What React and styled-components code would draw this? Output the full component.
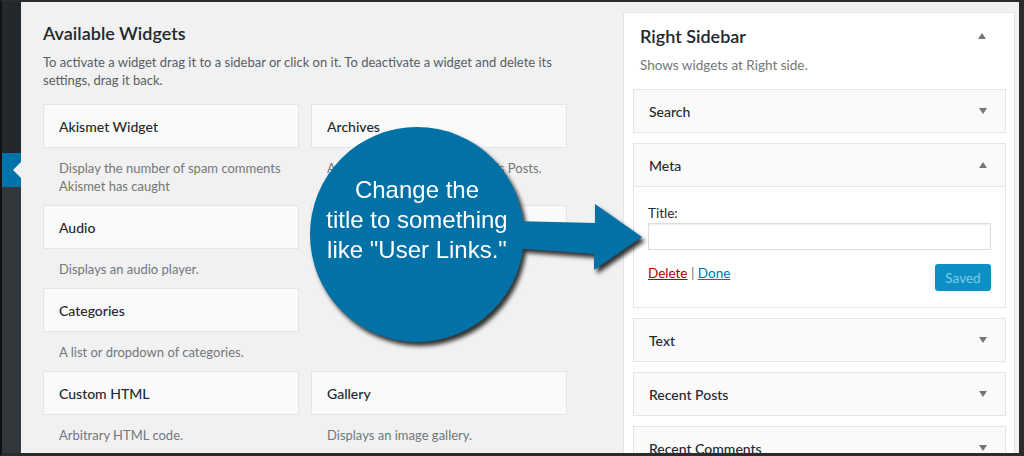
import React from 'react';
import styled, { createGlobalStyle } from 'styled-components';

const GlobalStyle = createGlobalStyle`
  html, body {
    margin: 0;
    padding: 0;
    background: #2b2b2b;
  }
  * {
    box-sizing: border-box;
  }
`;

const Frame = styled.div`
  position: relative;
  display: flex;
  width: 1024px;
  height: 456px;
  overflow: hidden;
  border-top: 2px solid #2b2b2b;
  border-right: 5px solid #2b2b2b;
  border-bottom: 3px solid #2b2b2b;
  border-left: 2px solid #111;
  background: #f1f1f1;
  font-family: Lato, 'Open Sans', sans-serif;
`;

const AdminMenu = styled.div`
  display: flex;
  flex-direction: column;
  width: 19px;
  flex-shrink: 0;
`;

const MenuBlock = styled.div`
  height: ${({ $h }) => ($h ? `${$h}px` : 'auto')};
  flex: ${({ $h }) => ($h ? 'none' : '1')};
  background: ${({ $color }) => $color};
`;

const ActiveItem = styled.div`
  display: flex;
  justify-content: flex-end;
  align-items: center;
  height: 34px;
  background: #0073aa;

  &::after {
    content: '';
    width: 0;
    height: 0;
    border-top: 8px solid transparent;
    border-bottom: 8px solid transparent;
    border-right: 8px solid #f1f1f1;
  }
`;

const Main = styled.div`
  display: flex;
  flex: 1;
  padding-left: 22px;
`;

const Available = styled.section`
  width: 524px;
  padding-top: 19px;
`;

const Heading = styled.h2`
  margin: 0;
  font-size: 18px;
  line-height: 24px;
  font-weight: 600;
  color: #23282d;
`;

const Intro = styled.p`
  margin: 8px 0 15px;
  font-size: 13px;
  line-height: 18px;
  color: #555d66;
`;

const WidgetGrid = styled.div`
  display: grid;
  grid-template-columns: repeat(2, 1fr);
  column-gap: 12px;
`;

const WidgetCell = styled.div`
  padding-bottom: 10px;
`;

const WidgetCard = styled.div`
  display: flex;
  align-items: center;
  height: 44px;
  padding: 0 15px;
  background: #fafafa;
  border: 1px solid #e5e5e5;
  font-size: 14px;
  font-weight: 500;
  color: #23282d;
`;

const WidgetDesc = styled.p`
  margin: 11px 0 0;
  padding: 0 16px;
  font-size: 13px;
  line-height: 18px;
  color: #72777c;
`;

const SidebarPanel = styled.section`
  width: 392px;
  margin: 10px 0 0 56px;
  padding: 0 8px 0 9px;
  background: #fff;
  border: 1px solid #e5e5e5;
  border-bottom: none;
`;

const PanelHead = styled.div`
  display: flex;
  align-items: center;
  justify-content: space-between;
  padding: 11px 20px 0 7px;
`;

const PanelTitle = styled.h2`
  margin: 0;
  font-size: 18px;
  line-height: 24px;
  font-weight: 600;
  color: #23282d;
`;

const Caret = styled.span`
  width: 0;
  height: 0;
  border-left: 4px solid transparent;
  border-right: 4px solid transparent;
  ${({ $up }) =>
    $up ? 'border-bottom: 6px solid #72777c;' : 'border-top: 6px solid #72777c;'}
`;

const PanelDesc = styled.p`
  margin: 8px 0 15px 7px;
  font-size: 13.5px;
  line-height: 18px;
  color: #72777c;
`;

const SidebarWidget = styled.div`
  margin-bottom: 10px;
  border: 1px solid #e5e5e5;
  background: #fafafa;
`;

const SidebarWidgetHead = styled.div`
  display: flex;
  align-items: center;
  justify-content: space-between;
  height: 42px;
  padding: 0 18px 0 15px;
  font-size: 14px;
  font-weight: 500;
  color: #23282d;
`;

const SidebarWidgetBody = styled.div`
  padding: 17px 14px 16px;
  background: #fff;
  border-top: 1px solid #e5e5e5;
`;

const FieldLabel = styled.label`
  display: block;
  font-size: 13.5px;
  line-height: 18px;
  color: #23282d;
`;

const TextInput = styled.input`
  display: block;
  width: 100%;
  height: 27px;
  margin: 1px 0 13px;
  border: 1px solid #ddd;
  box-shadow: inset 0 1px 2px rgba(0, 0, 0, 0.07);
  background: #fff;
`;

const ActionsRow = styled.div`
  display: flex;
  justify-content: space-between;
  align-items: flex-start;
`;

const Links = styled.div`
  padding-top: 1px;
  font-size: 13.5px;
  line-height: 18px;
  color: #72777c;
`;

const ActionLink = styled.a`
  color: ${({ $danger }) => ($danger ? '#a00' : '#0073aa')};
  text-decoration: underline;
`;

const SavedButton = styled.button`
  width: 56px;
  height: 27px;
  margin-top: 1px;
  padding: 0;
  border: none;
  border-radius: 3px;
  background: #0b8fc4;
  color: #7fcbe8;
  font-family: Lato, 'Open Sans', sans-serif;
  font-size: 13.5px;
`;

const Callout = styled.div`
  position: absolute;
  inset: 0;
  pointer-events: none;
  filter: drop-shadow(3px 4px 2px rgba(0, 0, 0, 0.8));
`;

const ArrowSvg = styled.svg`
  position: absolute;
  left: 500px;
  top: 193px;
`;

const Bubble = styled.div`
  position: absolute;
  left: 308px;
  top: 125px;
  width: 214px;
  height: 215px;
  padding-top: 48px;
  border-radius: 50%;
  background: #0271a6;
  color: #fff;
  font-family: 'Liberation Sans', Arial, sans-serif;
  font-size: 24px;
  line-height: 30px;
  text-align: center;
`;

const availableWidgets = [
  { title: 'Akismet Widget', desc: ['Display the number of spam comments', 'Akismet has caught'] },
  { title: 'Archives', desc: ["A monthly archive of your site's Posts."] },
  { title: 'Audio', desc: ['Displays an audio player.'] },
  { title: 'Calendar', desc: ["A calendar of your site's Posts."] },
  { title: 'Categories', desc: ['A list or dropdown of categories.'] },
  null,
  { title: 'Custom HTML', desc: ['Arbitrary HTML code.'] },
  { title: 'Gallery', desc: ['Displays an image gallery.'] },
];

const sidebarAfter = ['Text', 'Recent Posts', 'Recent Comments'];

const App = () => (
  <>
    <GlobalStyle />
    <Frame>
      <AdminMenu>
        <MenuBlock $h={151} $color="#23282d" />
        <ActiveItem />
        <MenuBlock $color="#32373c" />
      </AdminMenu>

      <Main>
        <Available>
          <Heading>Available Widgets</Heading>
          <Intro>
            To activate a widget drag it to a sidebar or click on it. To deactivate a widget and
            delete its settings, drag it back.
          </Intro>
          <WidgetGrid>
            {availableWidgets.map((w, i) =>
              w ? (
                <WidgetCell key={w.title}>
                  <WidgetCard>{w.title}</WidgetCard>
                  <WidgetDesc>
                    {w.desc.map((line, j) => (
                      <React.Fragment key={line}>
                        {j > 0 && <br />}
                        {line}
                      </React.Fragment>
                    ))}
                  </WidgetDesc>
                </WidgetCell>
              ) : (
                <WidgetCell key={`empty-${i}`} />
              )
            )}
          </WidgetGrid>
        </Available>

        <SidebarPanel>
          <PanelHead>
            <PanelTitle>Right Sidebar</PanelTitle>
            <Caret $up />
          </PanelHead>
          <PanelDesc>Shows widgets at Right side.</PanelDesc>

          <SidebarWidget>
            <SidebarWidgetHead>
              Search
              <Caret />
            </SidebarWidgetHead>
          </SidebarWidget>

          <SidebarWidget>
            <SidebarWidgetHead>
              Meta
              <Caret $up />
            </SidebarWidgetHead>
            <SidebarWidgetBody>
              <FieldLabel>Title:</FieldLabel>
              <TextInput type="text" />
              <ActionsRow>
                <Links>
                  <ActionLink $danger>Delete</ActionLink> | <ActionLink>Done</ActionLink>
                </Links>
                <SavedButton type="button">Saved</SavedButton>
              </ActionsRow>
            </SidebarWidgetBody>
          </SidebarWidget>

          {sidebarAfter.map((name) => (
            <SidebarWidget key={name}>
              <SidebarWidgetHead>
                {name}
                <Caret />
              </SidebarWidgetHead>
            </SidebarWidget>
          ))}
        </SidebarPanel>
      </Main>

      <Callout>
        <ArrowSvg width="150" height="85" viewBox="0 0 150 85">
          <polygon
            points="10,26 93,28 93,9 140,42 92,75 92,59 10,53"
            fill="#0271a6"
          />
        </ArrowSvg>
        <Bubble>
          Change the
          <br />
          title to something
          <br />
          like "User Links."
        </Bubble>
      </Callout>
    </Frame>
  </>
);

export default App;
